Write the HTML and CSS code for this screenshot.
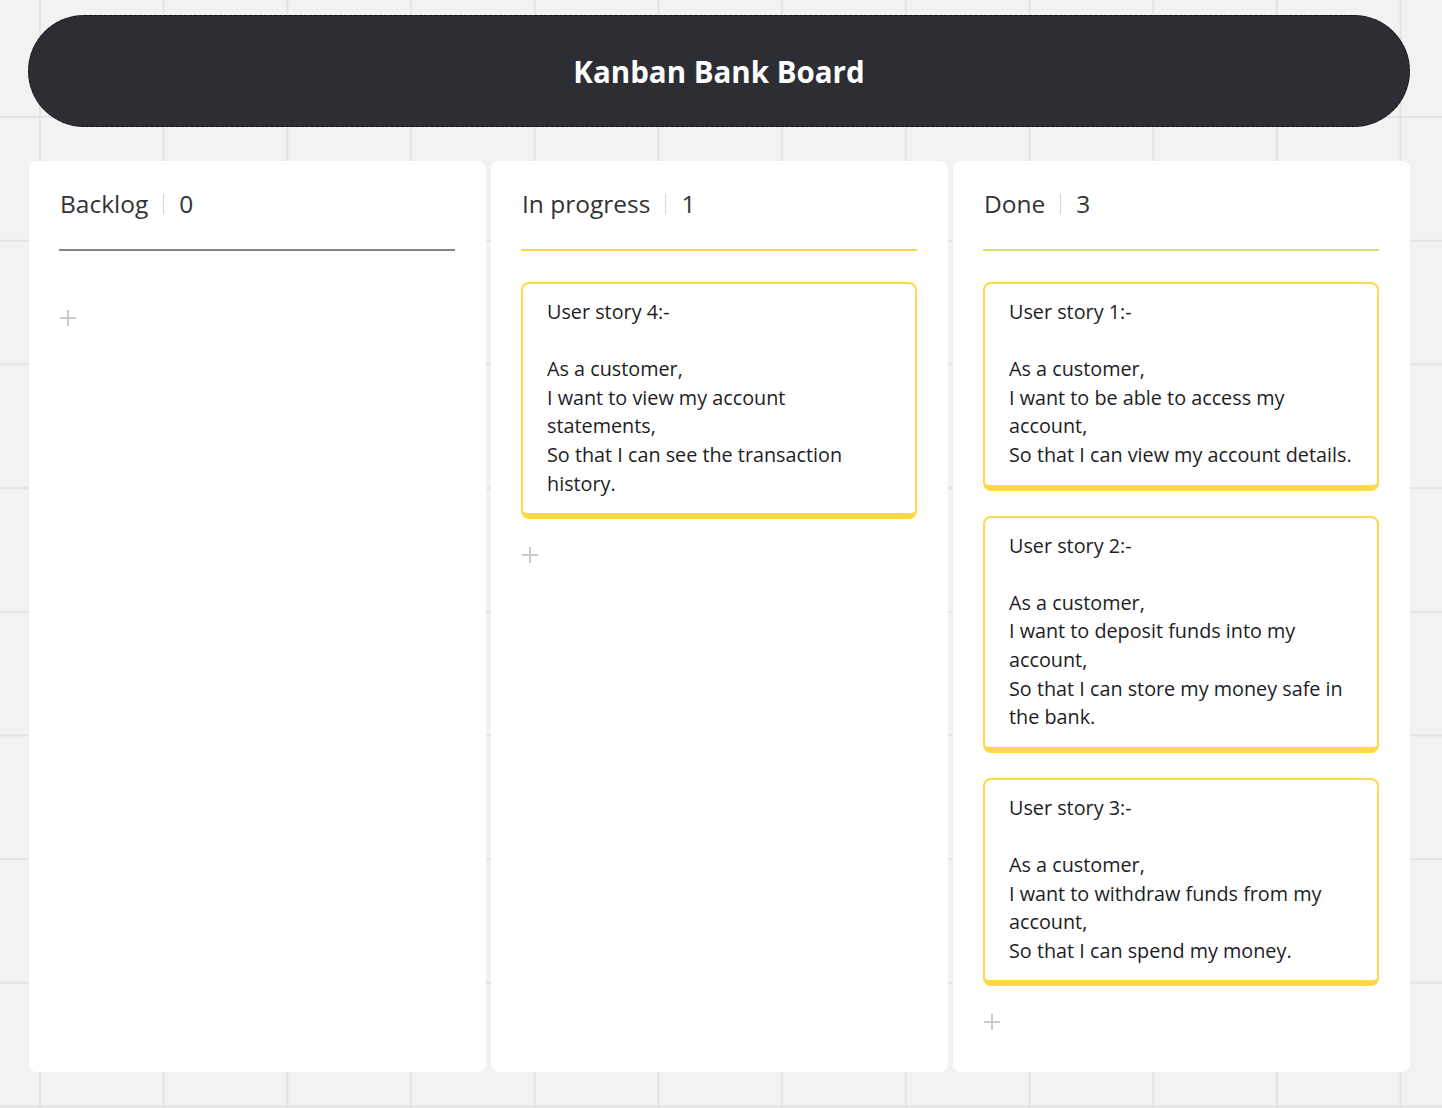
FILE: index.html
```html
<!DOCTYPE html>
<html lang="en">
<head>
<meta charset="utf-8">
<title>Kanban Bank Board</title>
<link rel="stylesheet" href="styles.css">
</head>
<body>
<div class="page">
  <header class="banner"><h1 class="banner-title">Kanban Bank Board</h1></header>
  <main class="board">
    <section class="column">
      <div class="col-head col-head--backlog">
        <span class="col-name">Backlog</span><span class="col-sep"></span><span class="col-count">0</span>
      </div>
      <div class="card-list"></div>
      <div class="add" aria-label="Add"></div>
    </section>
    <section class="column">
      <div class="col-head col-head--progress">
        <span class="col-name">In progress</span><span class="col-sep"></span><span class="col-count">1</span>
      </div>
      <div class="card-list">
        <article class="card"><p class="card-text">User story 4:-<br><br>As a customer,<br>I want to view my account statements,<br>So that I can see the transaction history.</p></article>
      </div>
      <div class="add" aria-label="Add"></div>
    </section>
    <section class="column">
      <div class="col-head col-head--done">
        <span class="col-name">Done</span><span class="col-sep"></span><span class="col-count">3</span>
      </div>
      <div class="card-list">
        <article class="card"><p class="card-text">User story 1:-<br><br>As a customer,<br>I want to be able to access my account,<br>So that I can view my account details.</p></article>
        <article class="card"><p class="card-text">User story 2:-<br><br>As a customer,<br>I want to deposit funds into my account,<br>So that I can store my money safe in the bank.</p></article>
        <article class="card"><p class="card-text">User story 3:-<br><br>As a customer,<br>I want to withdraw funds from my account,<br>So that I can spend my money.</p></article>
      </div>
      <div class="add" aria-label="Add"></div>
    </section>
  </main>
</div>
</body>
</html>
```
FILE: styles.css
```css
html, body {
  margin: 0;
  padding: 0;
}
body {
  width: 1442px;
  height: 1108px;
  overflow: hidden;
  font-family: "Open Sans", "Noto Sans", sans-serif;
  background-color: #f2f2f2;
  background-image:
    linear-gradient(to right, #e4e4e4 2px, transparent 2px),
    linear-gradient(to bottom, #e4e4e4 2px, transparent 2px);
  background-size: 123.7px 123.7px;
  background-position: 39px 116px;
}
.page {
  padding: 15px 32px 0 28px;
}
.banner {
  height: 112px;
  box-sizing: border-box;
  background: #2d2e33;
  border: 1px dashed #111114;
  border-radius: 56px;
  display: flex;
  align-items: center;
  justify-content: center;
}
.banner-title {
  margin: 0;
  color: #ffffff;
  font-size: 29.5px;
  font-weight: 700;
  line-height: 1;
  padding-top: 2px;
}
.board {
  margin-top: 34px;
  margin-left: 1px;
  display: grid;
  grid-template-columns: repeat(3, 457px);
  column-gap: 5px;
}
.column {
  height: 911px;
  box-sizing: border-box;
  background: #ffffff;
  border-radius: 8px;
  padding: 0 31px 0 30px;
}
.col-head {
  display: flex;
  align-items: center;
  height: 90px;
  box-sizing: border-box;
  padding-top: 24px;
  padding-bottom: 26px;
  padding-left: 1px;
  border-bottom: 2px solid #858585;
  font-size: 24.5px;
  line-height: 32px;
  color: #333333;
}
.col-head--progress { border-bottom-color: #fdd448; }
.col-head--done { border-bottom-color: #cfe46c; }
.col-sep {
  display: inline-block;
  width: 1px;
  height: 20px;
  background: #d6d6d6;
  margin: 0 15px 0 15px;
}
.card-list {
  margin-top: 31px;
  display: flex;
  flex-direction: column;
  gap: 25px;
}
.card {
  border: 2px solid #ffd945;
  border-bottom-width: 6px;
  border-radius: 8px;
  padding: 14px 21px 15px 24px;
  background: #ffffff;
}
.card-text {
  margin: 0;
  font-size: 19.8px;
  line-height: 28.6px;
  color: #1d1d1f;
}
.add {
  position: relative;
  width: 16px;
  height: 20px;
  margin-top: 26px;
  margin-left: 1px;
}
.add::before,
.add::after {
  content: "";
  position: absolute;
  background: #cccccc;
}
.add::before {
  left: 0;
  top: 9px;
  width: 16px;
  height: 2px;
}
.add::after {
  left: 7px;
  top: 2px;
  width: 2px;
  height: 16px;
}
```
